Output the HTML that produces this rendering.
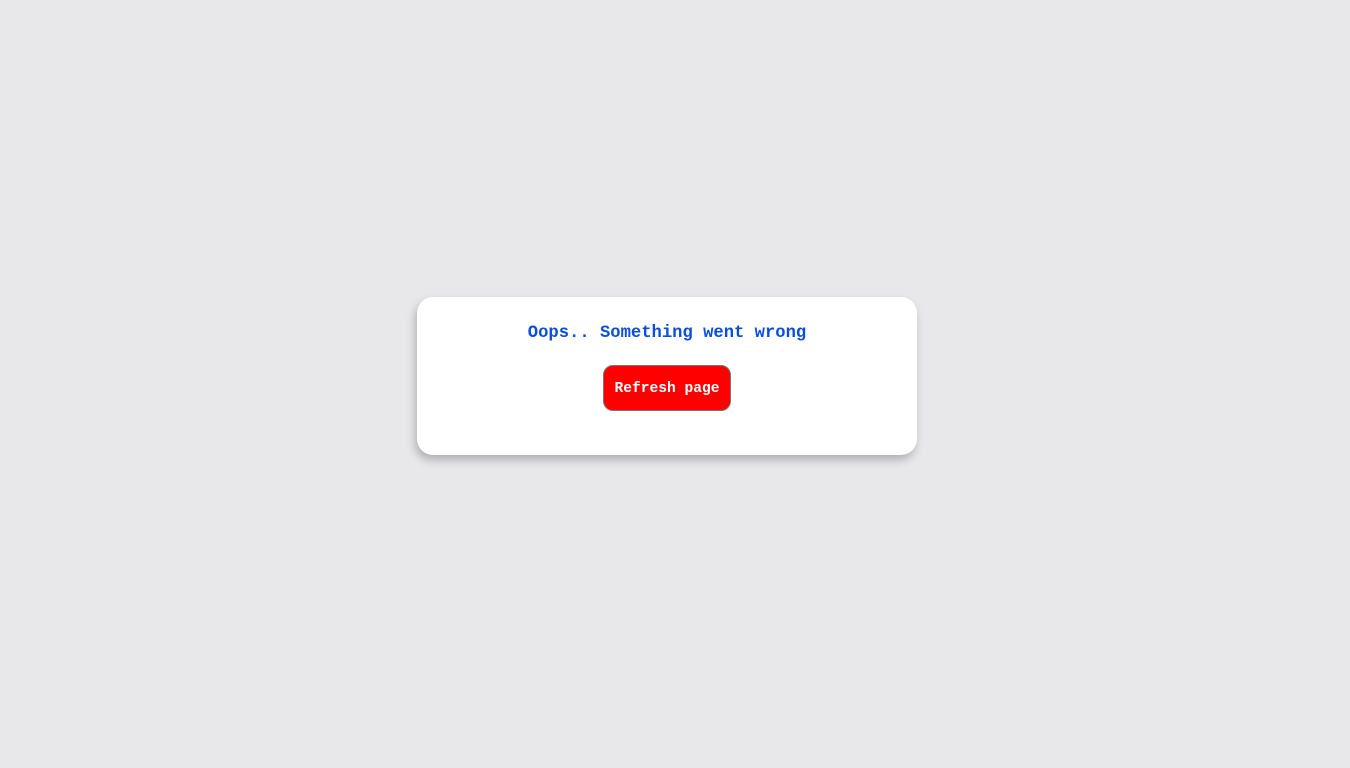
<!DOCTYPE html>
<html><head><meta charset="utf-8"><style>
html,body{margin:0;width:1350px;height:768px;background:#e8e8ea;overflow:hidden}
.card{position:absolute;left:417px;top:297px;width:500px;height:158px;background:#fff;border-radius:16px;box-shadow:-2px 5px 9px rgba(0,0,0,0.24)}
h1{position:absolute;top:322px;margin:0;text-align:center;font:bold 17.2px/24px "Liberation Mono",monospace;color:#0a4fdc}
.btn{position:absolute;left:603px;top:365px;width:126px;height:44px;background:#f00;border:1px solid #777;border-radius:10px;color:#fff;font:bold 14.6px/46px "Liberation Mono",monospace;text-align:center}
</style></head><body>
<div class="card"></div>
<h1 style="left:0;width:1334px">Oops.. Something went wrong</h1>
<div class="btn">Refresh page</div>
</body></html>
